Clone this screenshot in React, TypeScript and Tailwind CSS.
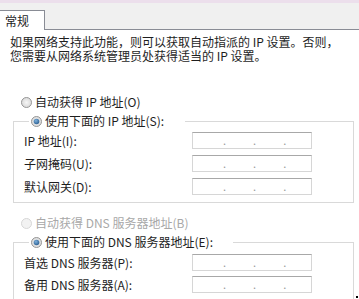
import React from 'react'

const font = { fontFamily: '"Noto Sans CJK SC", "Noto Sans", sans-serif' }

function Radio({ checked, disabled }: { checked?: boolean; disabled?: boolean }) {
  const ring = disabled ? '#d6d6d6' : '#969696'
  return (
    <svg width="11" height="11" viewBox="0 0 11 11" className="shrink-0">
      <defs>
        <radialGradient id="rf" cx="50%" cy="50%" r="60%">
          <stop offset="0%" stopColor="#f6f6f6" />
          <stop offset="100%" stopColor="#d4d4d4" />
        </radialGradient>
        <radialGradient id="rd" cx="40%" cy="35%" r="70%">
          <stop offset="0%" stopColor="#7db0dc" />
          <stop offset="100%" stopColor="#2a5d8f" />
        </radialGradient>
      </defs>
      <circle cx="5.5" cy="5.5" r="5" fill={disabled ? '#f2f2f2' : 'url(#rf)'} stroke={ring} strokeWidth="1" />
      {checked && <circle cx="5.5" cy="5.5" r="2.8" fill="url(#rd)" />}
    </svg>
  )
}

function IpBox() {
  return (
    <div className="w-[120px] h-[17px] flex items-center pl-[30px] gap-[27px] bg-white border border-[#d6d6d6] border-t-[#a8a8a8] text-[#9a9a9a] text-[11px] leading-none">
      <span>.</span>
      <span>.</span>
      <span>.</span>
    </div>
  )
}

function Row({ label }: { label: string }) {
  return (
    <div className="flex items-center h-[17px]">
      <span className="w-[168px] shrink-0">{label}</span>
      <IpBox />
    </div>
  )
}

export default function App() {
  return (
    <div className="w-[359px] h-[299px] overflow-hidden bg-white text-[12px] text-[#1e1e1e] relative" style={font}>
      {/* tab strip */}
      <div className="h-[3px] bg-[#ecdfec]" />
      <div className="h-[27px] bg-[#f0f0f0] border-b border-[#898c95] flex items-end">
        <div className="-ml-px -mb-px w-[46px] h-[20px] bg-white border border-b-0 border-[#898c95] flex items-center pl-[5px] leading-none">
          常规
        </div>
      </div>

      {/* intro */}
      <div className="pl-[10px] pt-[5px] leading-[14px]">
        <div className="h-[14px]">如果网络支持此功能，则可以获取自动指派的 IP 设置。否则，</div>
        <div className="h-[14px]">您需要从网络系统管理员处获得适当的 IP 设置。</div>
      </div>

      {/* IP */}
      <div className="mt-[31px] ml-[21px] h-[16px] flex items-center gap-[3px]">
        <Radio />
        <span>自动获得 IP 地址(O)</span>
      </div>
      <fieldset className="mt-[3px] ml-[13px] w-[341px] border border-[#d9d9d9] pl-[10px] pb-[7px]">
        <legend className="ml-[5px] px-[2px] w-[156px] h-[16px]">
          <div className="flex items-center gap-[3px] h-[16px]">
            <Radio checked />
            <span>使用下面的 IP 地址(S):</span>
          </div>
        </legend>
        <div className="mt-[3px] flex flex-col gap-[6px]">
          <Row label="IP 地址(I):" />
          <Row label="子网掩码(U):" />
          <Row label="默认网关(D):" />
        </div>
      </fieldset>

      {/* DNS */}
      <div className="mt-[12px] ml-[21px] h-[16px] flex items-center gap-[3px] text-[#a8a8a8]">
        <Radio disabled />
        <span>自动获得 DNS 服务器地址(B)</span>
      </div>
      <fieldset className="mt-[3px] ml-[13px] w-[341px] border border-[#d9d9d9] pl-[10px] pb-[14px]">
        <legend className="ml-[5px] px-[2px] w-[204px] h-[16px]">
          <div className="flex items-center gap-[3px] h-[16px]">
            <Radio checked />
            <span>使用下面的 DNS 服务器地址(E):</span>
          </div>
        </legend>
        <div className="mt-[4px] flex flex-col gap-[5px]">
          <Row label="首选 DNS 服务器(P):" />
          <Row label="备用 DNS 服务器(A):" />
        </div>
      </fieldset>

      <span className="absolute right-[1px] bottom-[1px] w-[2px] h-[2px] bg-black" />
    </div>
  )
}
